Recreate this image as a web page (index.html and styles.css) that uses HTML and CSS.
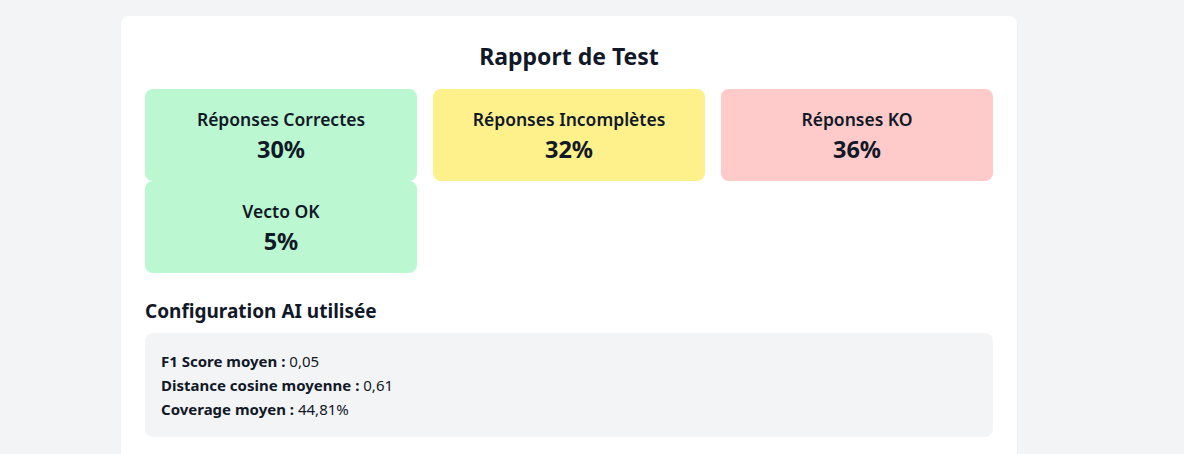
FILE: index.html
```html
<!DOCTYPE html>
<html lang="fr">
<head>
<meta charset="utf-8">
<title>Rapport de Test</title>
<link rel="stylesheet" href="styles.css">
</head>
<body>
<main class="page">
  <section class="card">
    <h1 class="title">Rapport de Test</h1>
    <div class="stats">
      <div class="stat stat-green">
        <div class="stat-label">Réponses Correctes</div>
        <div class="stat-value">30%</div>
      </div>
      <div class="stat stat-yellow">
        <div class="stat-label">Réponses Incomplètes</div>
        <div class="stat-value">32%</div>
      </div>
      <div class="stat stat-red">
        <div class="stat-label">Réponses KO</div>
        <div class="stat-value">36%</div>
      </div>
      <div class="stat stat-green">
        <div class="stat-label">Vecto OK</div>
        <div class="stat-value">5%</div>
      </div>
    </div>
    <h2 class="subtitle">Configuration AI utilisée</h2>
    <div class="config">
      <p class="config-line"><strong>F1 Score moyen :</strong> 0,05</p>
      <p class="config-line"><strong>Distance cosine moyenne :</strong> 0,61</p>
      <p class="config-line"><strong>Coverage moyen :</strong> 44,81%</p>
    </div>
  </section>
</main>
</body>
</html>
```

FILE: styles.css
```css
* { box-sizing: border-box; }
html, body { margin: 0; padding: 0; }
body {
  background: #f3f4f6;
  font-family: "Noto Sans", "DejaVu Sans", sans-serif;
  color: #111827;
}
.page {
  padding: 16px 0 0 121px;
}
.card {
  width: 896px;
  background: #ffffff;
  border-radius: 8px;
  padding: 24px;
  box-shadow: 0 1px 2px rgba(0,0,0,0.04);
}
.title {
  margin: 0 0 17px;
  text-align: center;
  font-size: 23px;
  line-height: 32px;
  font-weight: 700;
}
.stats {
  display: grid;
  grid-template-columns: repeat(3, 1fr);
  column-gap: 16px;
  row-gap: 0;
}
.stat {
  border-radius: 8px;
  padding: 16px;
  text-align: center;
}
.stat-green { background: #bbf7d0; }
.stat-yellow { background: #fef08a; }
.stat-red { background: #fecaca; }
.stat-label {
  font-size: 17.5px;
  line-height: 28px;
  font-weight: 600;
}
.stat-value {
  font-size: 23.5px;
  line-height: 32px;
  font-weight: 700;
}
.subtitle {
  margin: 24px 0 8px;
  font-size: 19px;
  line-height: 28px;
  font-weight: 700;
}
.config {
  background: #f3f4f6;
  border-radius: 8px;
  padding: 16px;
}
.config-line {
  margin: 0;
  font-size: 15px;
  line-height: 24px;
}
.config-line strong { font-weight: 700; }
```
